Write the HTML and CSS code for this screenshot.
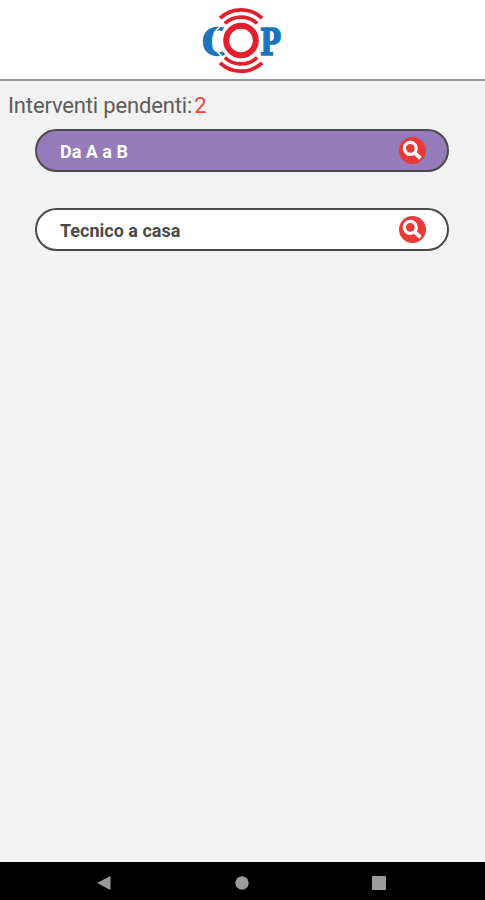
FILE: index.html
```html
<!DOCTYPE html>
<html lang="it">
<head>
    <meta charset="UTF-8">
    <meta name="viewport" content="width=device-width, initial-scale=1.0">
    <title>Interventi pendenti</title>
    <link rel="stylesheet" href="styles.css">
</head>
<body>
    <header class="header">
        <svg class="logo" viewBox="0 0 84 66" role="img" aria-label="COP">
            <text class="logo-letter" x="2" y="47.5" textLength="29" lengthAdjust="spacingAndGlyphs">C</text>
            <circle cx="41" cy="33.5" r="21.2" fill="#fff"/>
            <path d="M14 26L23 16M14 41L23 51" stroke="#fff" stroke-width="1.6"/>
            <text class="logo-letter" x="60" y="47.5" textLength="21" lengthAdjust="spacingAndGlyphs">P</text>
            <g fill="none" stroke="#e31e2d">
                <circle cx="41" cy="33.5" r="14.8" stroke-width="6"/>
                <path stroke-width="3.7" d="M20 11.2A30.5 30.5 0 0 1 62 11.2M24.8 16.5A23.7 23.7 0 0 1 57.2 16.5M20 55.8A30.5 30.5 0 0 0 62 55.8M24.8 50.5A23.7 23.7 0 0 0 57.2 50.5"/>
            </g>
        </svg>
    </header>

    <main class="content">
        <h1 class="title">Interventi pendenti:<span class="count">2</span></h1>
        <div class="list">
            <div class="item active">
                <span>Da A a B</span>
                <svg class="search" viewBox="0 0 27 27">
                    <circle cx="13.5" cy="13.5" r="13.5" fill="#e93a38"/>
                    <circle cx="11.3" cy="11.3" r="6" fill="none" stroke="#fff" stroke-width="3.2"/>
                    <path d="M15.6 15.6L21.4 21.4" stroke="#fff" stroke-width="3.8"/>
                </svg>
            </div>
            <div class="item">
                <span>Tecnico a casa</span>
                <svg class="search" viewBox="0 0 27 27">
                    <circle cx="13.5" cy="13.5" r="13.5" fill="#e93a38"/>
                    <circle cx="11.3" cy="11.3" r="6" fill="none" stroke="#fff" stroke-width="3.2"/>
                    <path d="M15.6 15.6L21.4 21.4" stroke="#fff" stroke-width="3.8"/>
                </svg>
            </div>
        </div>
    </main>

    <nav class="navbar">
        <svg viewBox="0 0 16 16"><path d="M1 8L14.5 1V15Z"/></svg>
        <svg viewBox="0 0 16 16"><circle cx="8" cy="8" r="6.7"/></svg>
        <svg viewBox="0 0 16 16"><rect x="1" y="1" width="14" height="14" rx="1"/></svg>
    </nav>
</body>
</html>
```
FILE: styles.css
```css
* {
    box-sizing: border-box;
}

body {
    margin: 0;
    height: 100vh;
    display: flex;
    flex-direction: column;
    font-family: Roboto, sans-serif;
    background-color: #f2f2f2;
    color: #4a4a4a;
}

.header {
    display: flex;
    justify-content: center;
    height: 81px;
    padding: 7px 2px 0 0;
    background-color: #fff;
    border-bottom: 2px solid #999;
}

.logo {
    width: 84px;
    height: 66px;
    overflow: visible;
}

.logo-letter {
    font-family: "DejaVu Serif", serif;
    font-size: 38px;
    font-weight: bold;
    fill: #1b75bc;
    stroke: #1b75bc;
    stroke-width: 1.6px;
}

.content {
    flex: 1;
}

.title {
    margin: 0;
    padding: 12px 8px 0;
    font-size: 22px;
    line-height: 26px;
    font-weight: 400;
    letter-spacing: -0.15px;
    color: #5c5c5c;
}

.count {
    margin-left: 2px;
    color: #ee4444;
}

.list {
    display: flex;
    flex-direction: column;
    gap: 36px;
    padding: 10px 36px 0 35px;
}

.item {
    display: flex;
    justify-content: space-between;
    align-items: center;
    height: 43px;
    padding: 0 21px 0 23px;
    font-size: 18px;
    font-weight: 700;
    background-color: #fff;
    border: 2px solid #4b4b4b;
    border-radius: 22px;
}

.item span {
    padding-top: 2px;
}

.active {
    color: #fff;
    background-color: #957bba;
}

.search {
    width: 27px;
    height: 27px;
}

.navbar {
    display: flex;
    align-items: center;
    justify-content: space-between;
    height: 38px;
    padding: 4px 98px 0 96px;
    background-color: #000;
}

.navbar svg {
    width: 16px;
    height: 16px;
    fill: #9b9b9b;
}
```
